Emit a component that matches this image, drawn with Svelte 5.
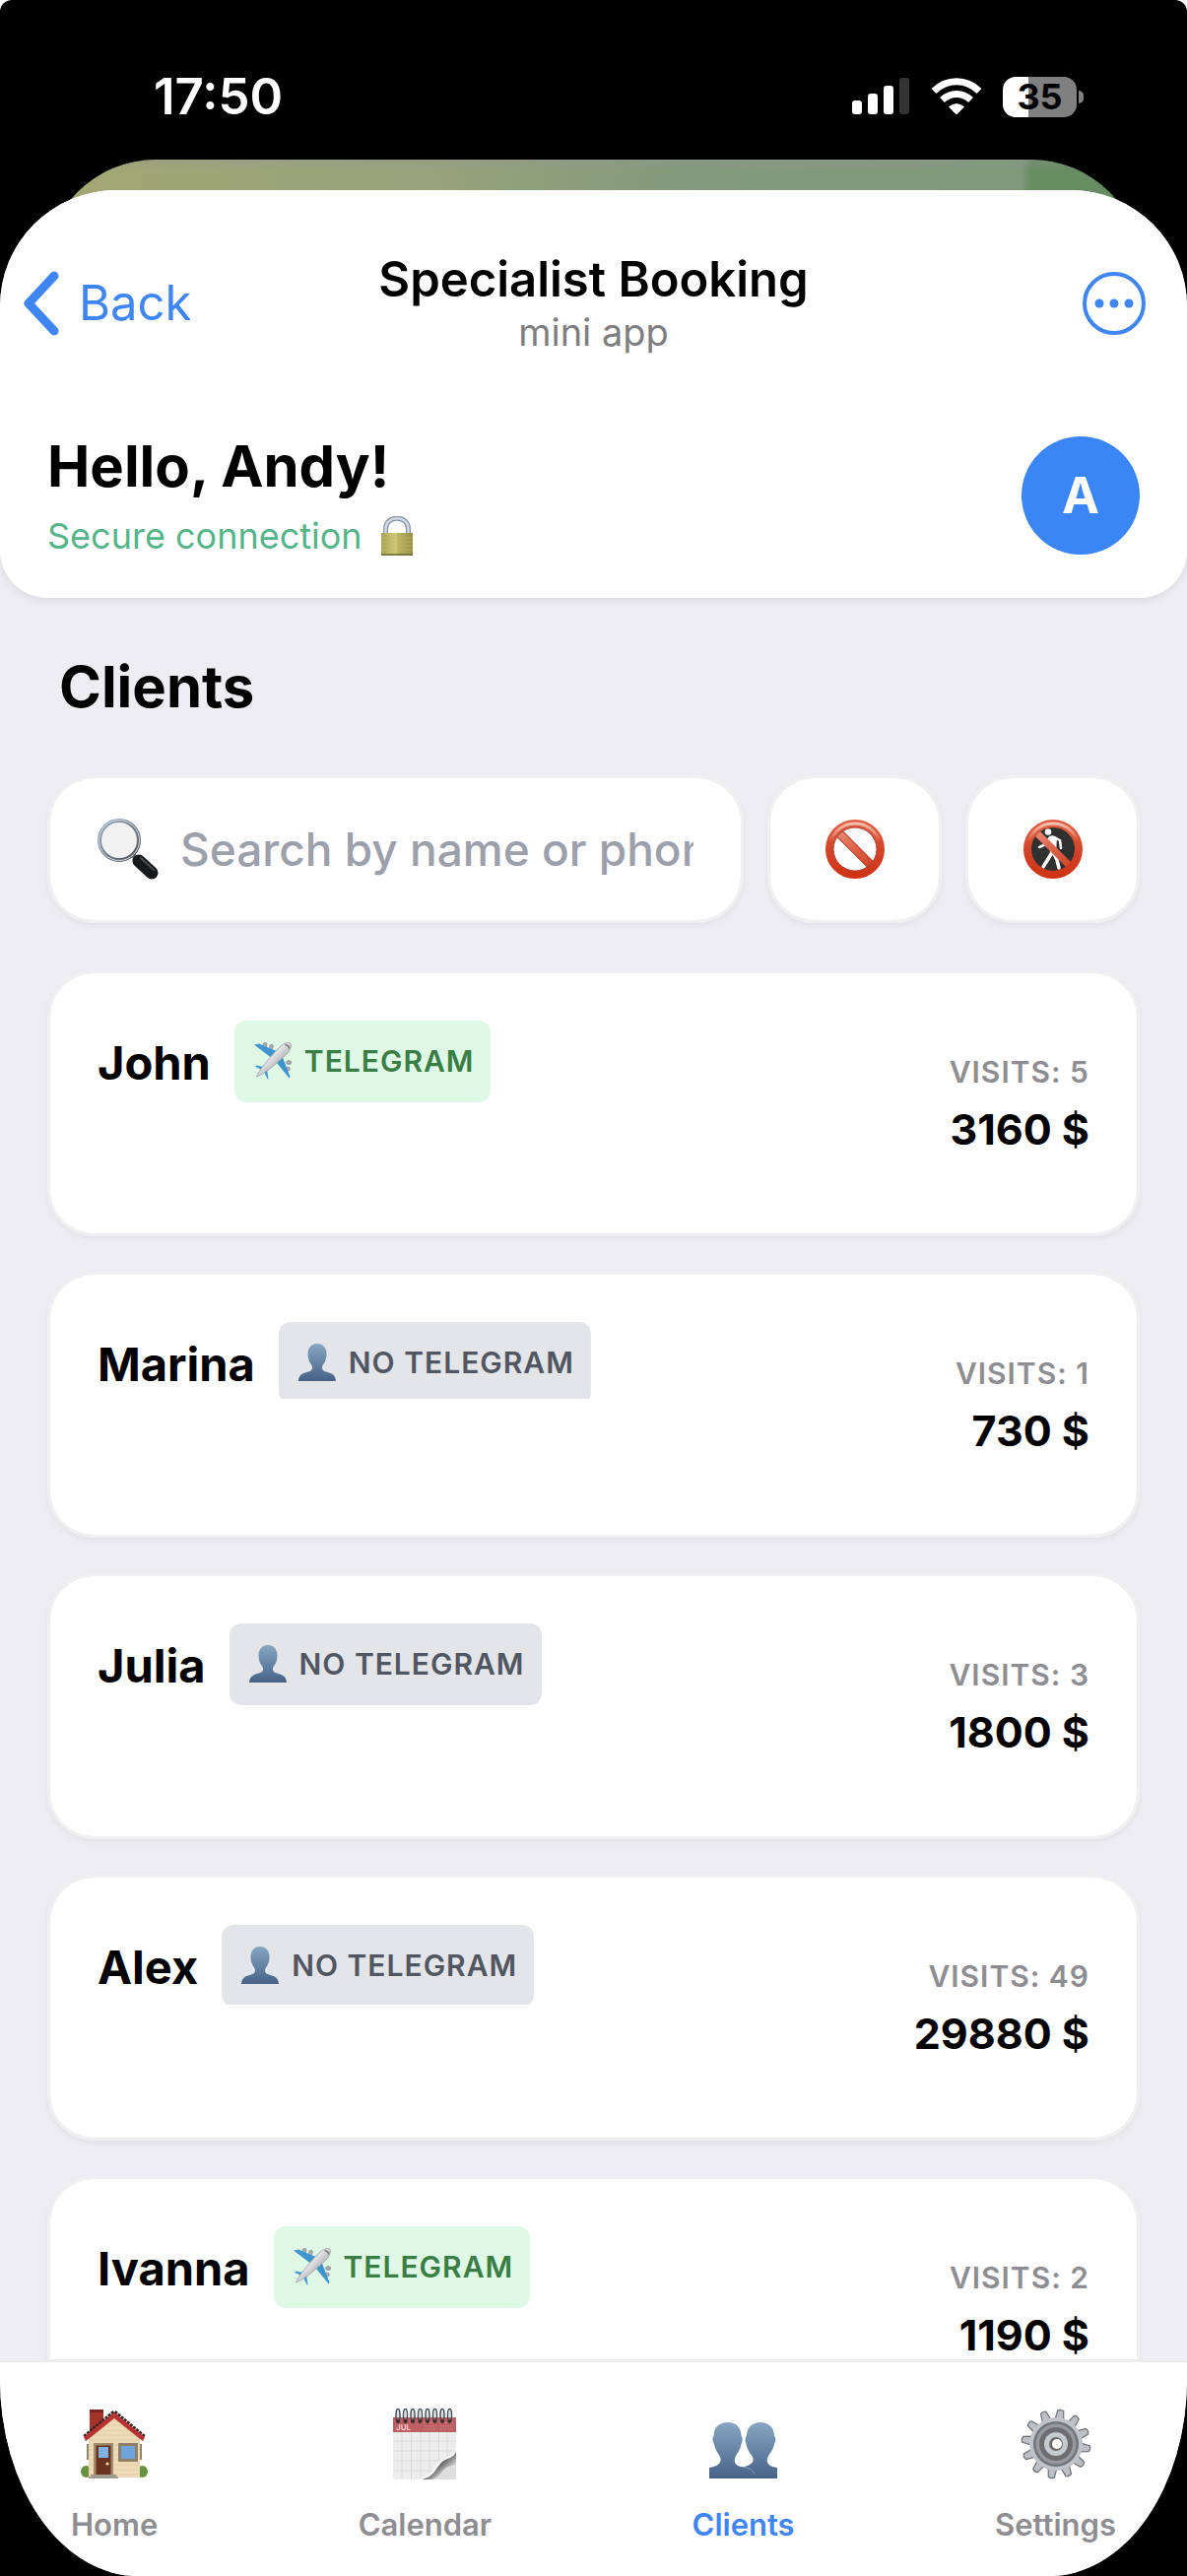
<script lang="ts">
	type Client = { name: string; telegram: boolean; visits: number; total: number; trim?: string };

	const clients: Client[] = [
		{ name: 'John', telegram: true, visits: 5, total: 3160 },
		{ name: 'Marina', telegram: false, visits: 1, total: 730, trim: 'flat' },
		{ name: 'Julia', telegram: false, visits: 3, total: 1800 },
		{ name: 'Alex', telegram: false, visits: 49, total: 29880, trim: 'short' },
		{ name: 'Ivanna', telegram: true, visits: 2, total: 1190 }
	];

	const tabs = ['Home', 'Calendar', 'Clients', 'Settings'];
	const teeth = Array.from({ length: 12 }, (_, i) => i * 30 + 8);
	const rings = Array.from({ length: 8 }, (_, i) => 5 + i * 7.5);

	let activeTab = $state('Clients');
	let query = $state('');

	let visible = $derived(
		clients.filter((client) => client.name.toLowerCase().includes(query.toLowerCase()))
	);
</script>

{#snippet plane()}
	<svg class="badge__icon" viewBox="0 0 38 38" aria-hidden="true">
		<g fill="#a9aaad" stroke="#7d8187" stroke-width="0.6">
			<ellipse cx="11" cy="2.8" rx="2" ry="2.6" />
			<ellipse cx="17.5" cy="4.6" rx="1.9" ry="2.4" />
			<ellipse cx="35.2" cy="20.6" rx="2.6" ry="2" />
			<ellipse cx="34" cy="27" rx="2.4" ry="1.9" />
		</g>
		<path d="M0 2.5 5 1.5 25 10 19 17Z" fill="#3f95cf" />
		<path d="M36.500 35 35.500 36.500 21.500 19 28 13Z" fill="#3f95cf" />
		<path d="M.5 24.500 3 23.500 12 25.500 9 29Z" fill="#4a9dd4" />
		<path d="M14.500 37.500 13.500 37.500 9.500 29 13 26Z" fill="#4a9dd4" />
		<path
			d="M2.500 35C5 29 13 18 26 5 29.500 1.500 34.500-.8 36.800 1.200 38.800 3.500 36 9 32.500 12.500 20 24.500 9 32.500 2.500 35Z"
			fill="url(#fuselage)"
			stroke="#9b9ca0"
			stroke-width="0.8"
		/>
		<path d="M31.500 2.500Q35 3 35.800 6.500" fill="none" stroke="#77797e" stroke-width="1.500" />
	</svg>
{/snippet}

{#snippet bust()}
	<svg class="badge__icon" viewBox="0 0 38 38" aria-hidden="true">
		<path
			d="M19 0C25 0 28.500 4.500 28.500 10.500 28.500 14.500 27.500 18 25.500 20.500 23.500 23 23.500 25 25 27 27.500 30 37.500 28 38 38H0C.500 28 10.500 30 13 27 14.500 25 14.500 23 12.500 20.500 10.500 18 9.500 14.500 9.500 10.500 9.500 4.500 13 0 19 0Z"
			fill="url(#silhouette)"
		/>
	</svg>
{/snippet}

{#snippet tabIcon(name: string)}
	<svg class="tab__icon" viewBox="0 0 72 72" aria-hidden="true">
		{#if name === 'Home'}
			<rect x="11" y="1" width="14" height="28" fill="#a3342c" />
			<rect x="11" y="1" width="14" height="3" fill="#7c241f" />
			<ellipse cx="7.500" cy="64" rx="5.500" ry="6" fill="#68923f" />
			<ellipse cx="64.500" cy="64" rx="5.500" ry="6" fill="#68923f" />
			<rect x="8" y="36" width="3" height="16" fill="#8f846c" />
			<rect x="61" y="36" width="3" height="16" fill="#8f846c" />
			<path d="M36 6 62 29V70H10V29Z" fill="#ecdbb6" />
			<path
				d="M26 17h20M20 22h32M15 27h42M10 32h52M10 37h52M10 42h52M10 47h52M10 52h52M10 57h52M10 62h52M10 67h52"
				stroke="#dfcca3"
				stroke-width="0.8"
			/>
			<path d="M36 4 66 29" fill="none" stroke="#302020" stroke-width="5" stroke-dasharray="3 1" />
			<path d="M36 4 6 29" fill="none" stroke="#302020" stroke-width="5" stroke-dasharray="3 1" />
			<path d="M5 29 36 4 67 29 65 33 61 30 36 10 11 30 7 33Z" fill="#b8332f" />
			<rect x="15" y="35" width="20" height="32" fill="#a08b6d" />
			<rect x="17.500" y="37.500" width="15" height="30" fill="#69311f" />
			<rect x="20" y="39" width="10" height="11" fill="#7eb2e2" />
			<circle cx="29" cy="56" r="1.600" fill="#f3d9a2" />
			<path d="M12 67H38V70H12ZM10 69H40V71H10Z" fill="#a19a8f" />
			<rect x="40" y="35" width="20" height="19" fill="#8e7f66" />
			<rect x="43" y="38" width="14" height="13" fill="#6ea3dc" />
		{:else if name === 'Calendar'}
			<rect x="4" y="9" width="64" height="63" fill="#ededed" />
			<rect x="4" y="9" width="64" height="15" fill="#bd5e63" />
			<path
				d="M13 24V72M22.500 24V72M32 24V72M41 24V72M50.500 24V72M59 24V72M4 33H68M4 43H68M4 53H68M4 63H68"
				stroke="#dadada"
				stroke-width="1"
			/>
			<text x="7" y="22" class="tab__month">JUL</text>
			<path d="M35 14.500h13M52 14.500h13M35 18h13M52 18h13M35 21h13M52 21h13" stroke="#cf878a" stroke-width="1" stroke-dasharray="1.500 1" />
			<path d="M28 72Q42 69 47 58 51 51 60 49 67 46 68 36V72Z" fill="#f8f8f8" />
			<path d="M34 72Q44 69 49 60 54 52 62 50 67 48 68 43V58Q58 58 54 64 50 70 44 72Z" fill="url(#curl)" />
			<path d="M44 72Q50 70 54 64 58 58 68 58V72Z" fill="#dedede" />
			{#each rings as x}
				<ellipse cx={x + 4} cy="7" rx="2" ry="6.500" fill="none" stroke="#434b50" stroke-width="1.500" />
				<path d="M{x + 4} 2V9" stroke="#cfdce0" stroke-width="1.500" />
				<circle cx={x + 4} cy="13" r="2" fill="#3f2c2e" />
			{/each}
		{:else if name === 'Clients'}
			<path
				d="M53 14C61 14 67 19 67 28 68.500 29 69 33 67 36 66 42 62 46 60.500 49 58.500 54 60 59 70 60V71H30V60C44 59 47 54 45 49 43 46 39.500 42 38.500 36 37 33 37.500 29 39 28 39 19 45 14 53 14Z"
				fill="url(#silhouette)"
			/>
			<path
				d="M20 14C28 14 33.500 19 33.500 28 35 29 35 33 33.500 36 32.500 42 29 46 27.500 49 25.500 54 27 58 35 59.500 42 60 46 63 48 71H1V60C11 59 14 54 12 49 10.500 46 7 42 6 36 4 33 4 29 5.500 28 5.500 19 11 14 20 14Z"
				fill="url(#silhouette)"
			/>
			<path d="M35 59.500Q45 60 47 67" fill="none" stroke="#91a6bd" stroke-width="0.8" />
		{:else}
			{#each teeth as angle}
				<path
					d="M31.500 12 33 2Q36 0 39 2L40.500 12Z"
					fill="#bcbfc6"
					stroke="#6e6f73"
					stroke-width="1.200"
					transform="rotate({angle} 36 36)"
				/>
			{/each}
			<circle cx="36" cy="36" r="27" fill="#c0c3c9" />
			<circle cx="36" cy="36" r="23" fill="#6f757b" />
			<circle cx="36" cy="36" r="20.500" fill="#969a9f" />
			<circle cx="36" cy="36" r="17" fill="#6e6e72" />
			<circle cx="36" cy="36" r="12" fill="#c6cbd2" />
			<circle cx="36" cy="36" r="7" fill="#6d6a66" />
			<circle cx="37" cy="36" r="5" fill="#fff" />
		{/if}
	</svg>
{/snippet}

<svg class="defs" aria-hidden="true">
	<defs>
		<linearGradient id="silhouette" x1="0" y1="0" x2="0" y2="1">
			<stop offset="0" stop-color="#86a6c3" />
			<stop offset="1" stop-color="#466287" />
		</linearGradient>
		<linearGradient id="fuselage" x1="0" y1="0" x2="1" y2="1">
			<stop offset="0.350" stop-color="#f3f2f3" />
			<stop offset="0.650" stop-color="#b5b4b8" />
		</linearGradient>
		<linearGradient id="curl" x1="0" y1="0" x2="1" y2="1">
			<stop offset="0.250" stop-color="#d5d5d5" />
			<stop offset="0.500" stop-color="#666" />
			<stop offset="0.750" stop-color="#dedede" />
		</linearGradient>
		<linearGradient id="ring" x1="0" y1="0" x2="0" y2="1">
			<stop offset="0" stop-color="#de5f43" />
			<stop offset="0.500" stop-color="#d4452a" />
			<stop offset="1" stop-color="#cf3417" />
		</linearGradient>
		<linearGradient id="shine" x1="0" y1="0" x2="0" y2="1">
			<stop offset="0" stop-color="#f8c2b3" />
			<stop offset="0.350" stop-color="#f8c2b3" stop-opacity="0" />
		</linearGradient>
		<linearGradient id="slash" x1="0" y1="0" x2="1" y2="1">
			<stop offset="0" stop-color="#e98a74" />
			<stop offset="0.500" stop-color="#dd6148" />
			<stop offset="1" stop-color="#cf4429" />
		</linearGradient>
		<linearGradient id="brass" x1="0" y1="0" x2="1" y2="0">
			<stop offset="0" stop-color="#aaa355" />
			<stop offset="0.480" stop-color="#d1ca78" />
			<stop offset="0.520" stop-color="#bdb566" />
			<stop offset="1" stop-color="#989044" />
		</linearGradient>
		<linearGradient id="lens" x1="0" y1="0" x2="1" y2="1">
			<stop offset="0" stop-color="#9db2cc" />
			<stop offset="1" stop-color="#4e4e4e" />
		</linearGradient>
	</defs>
</svg>

<div class="screen">
	<div class="status">
		<time>17:50</time>
		<div class="status__icons">
			<svg width="59" height="42" viewBox="0 0 59 42" aria-hidden="true">
				<g fill="#fff">
					<rect x="0" y="25" width="10" height="14" rx="3" />
					<rect x="16" y="18" width="10" height="21" rx="3" />
					<rect x="32" y="10" width="10" height="29" rx="3" />
				</g>
				<rect x="48" y="2" width="10" height="37" rx="3" fill="#333" />
			</svg>
			<svg width="52" height="42" viewBox="0 0 52 42" aria-hidden="true">
				<g fill="none" stroke="#fff" stroke-width="7">
					<path d="M3 15.500C16 2.500 36 2.500 49 15.500" />
					<path d="M11.500 24.500C20 16.500 32 16.500 40.500 24.500" />
				</g>
				<path d="M18 31.500Q26 24.500 34 31.500L26.800 38.700Q26 39.400 25.200 38.700Z" fill="#fff" />
			</svg>
			<div class="battery"><span>35</span></div>
		</div>
	</div>

	<div class="backdrop"></div>

	<div class="sheet">
		<header class="top">
			<div class="nav">
				<button class="nav__back" type="button">
					<svg width="38" height="66" viewBox="0 0 38 66" aria-hidden="true">
						<path d="M33 5 7 33 33 61" fill="none" stroke="#3f86f4" stroke-width="9" stroke-linecap="round" stroke-linejoin="round" />
					</svg>
					Back
				</button>
				<div class="nav__title">
					<strong>Specialist Booking</strong>
					<span>mini app</span>
				</div>
				<button class="nav__more" type="button" aria-label="More">
					<svg width="64" height="64" viewBox="0 0 64 64" aria-hidden="true">
						<circle cx="32" cy="32" r="30" fill="none" stroke="#3f86f4" stroke-width="4" />
						<g fill="#3f86f4">
							<circle cx="17" cy="32" r="4.500" />
							<circle cx="32" cy="32" r="4.500" />
							<circle cx="47" cy="32" r="4.500" />
						</g>
					</svg>
				</button>
			</div>

			<div class="greeting">
				<div>
					<h1>Hello, Andy!</h1>
					<p>
						Secure connection
						<svg width="34" height="40" viewBox="0 0 34 40" aria-hidden="true">
							<path d="M5.500 19V13C5.500-1.500 28.500-1.500 28.500 13V19" fill="none" stroke="#8894a4" stroke-width="5" />
							<path d="M5.500 19V13C5.500-1.500 28.500-1.500 28.500 13V19" fill="none" stroke="#d2dbe5" stroke-width="2.500" />
							<rect x="1" y="17" width="32" height="23" fill="url(#brass)" />
							<path d="M1 22h32M1 26h32M1 30h32M1 34h32" stroke="#c5bd70" stroke-width="0.6" />
							<path d="M1 39H33" stroke="#6d6836" stroke-width="1.500" />
						</svg>
					</p>
				</div>
				<div class="avatar">A</div>
			</div>
		</header>

		<main>
			<h2>Clients</h2>

			<div class="filters">
				<label class="search">
					<svg width="62" height="62" viewBox="0 0 62 62" aria-hidden="true">
						<path d="M36 37 42 43" stroke="#74777a" stroke-width="5" />
						<path d="M42 43 55 55" stroke="#18191b" stroke-width="13" stroke-linecap="round" />
						<path d="M44 40 57 52" stroke="#4a4b4e" stroke-width="2" stroke-linecap="round" />
						<circle cx="22" cy="22" r="20" fill="#f2f2f3" stroke="url(#lens)" stroke-width="4" />
						<circle cx="22" cy="22" r="20.500" fill="none" stroke="#d3dae3" stroke-width="1" />
					</svg>
					<input type="text" placeholder="Search by name or phone" aria-label="Search by name or phone" bind:value={query} />
				</label>
				<button class="filter" type="button" aria-label="Blocked clients">
					<svg width="60" height="60" viewBox="0 0 60 60" aria-hidden="true">
						<path d="M13 13 47 47" stroke="#b93a22" stroke-width="9" />
						<path d="M13 13 47 47" stroke="url(#slash)" stroke-width="7" />
						<circle cx="30" cy="30" r="26" fill="none" stroke="url(#ring)" stroke-width="8" />
						<circle cx="30" cy="30" r="26" fill="none" stroke="url(#shine)" stroke-width="3" />
						<circle cx="30" cy="30" r="22" fill="none" stroke="#a94331" stroke-width="1" />
					</svg>
				</button>
				<button class="filter" type="button" aria-label="No-show clients">
					<svg width="60" height="60" viewBox="0 0 60 60" aria-hidden="true">
						<circle cx="30" cy="30" r="26" fill="#303030" />
						<path d="M26 17Q30 15 34 18L33 35H27Z" fill="#fff" />
						<g fill="none" stroke="#fff" stroke-linecap="round" stroke-linejoin="round">
							<path d="M33 19 37 21 38 29" stroke-width="2.500" />
							<path d="M26 19 23 25 16 28" stroke-width="2.500" />
							<path d="M28 35 25 40 20 48" stroke-width="3.500" />
							<path d="M31 35 34 41 36 49" stroke-width="3.500" />
						</g>
						<circle cx="25" cy="12.500" r="3.300" fill="#fff" />
						<path d="M13 13 47 47" stroke="url(#slash)" stroke-width="7" />
						<circle cx="30" cy="30" r="26" fill="none" stroke="url(#ring)" stroke-width="8" />
						<circle cx="30" cy="30" r="26" fill="none" stroke="url(#shine)" stroke-width="3" />
					</svg>
				</button>
			</div>

			<ul class="clients">
				{#each visible as client (client.name)}
					<li class="card">
						<div class="card__person">
							<h3>{client.name}</h3>
							<span
								class="badge"
								class:badge--telegram={client.telegram}
								class:badge--flat={client.trim === 'flat'}
								class:badge--short={client.trim === 'short'}
							>
								{#if client.telegram}
									{@render plane()} Telegram
								{:else}
									{@render bust()} No Telegram
								{/if}
							</span>
						</div>
						<div class="card__stats">
							<span class="card__visits">Visits: {client.visits}</span>
							<strong>{client.total} $</strong>
						</div>
					</li>
				{/each}
			</ul>
		</main>

		<nav class="tabs">
			{#each tabs as tab}
				<button
					class="tab"
					class:is-active={activeTab === tab}
					type="button"
					onclick={() => (activeTab = tab)}
				>
					{@render tabIcon(tab)}
					{tab}
				</button>
			{/each}
		</nav>
	</div>
</div>

<style>
	:global(body) {
		background: #fff;
	}

	.defs {
		position: absolute;
		width: 0;
		height: 0;
	}

	.screen {
		display: flex;
		flex-direction: column;
		height: 100vh;
		overflow: hidden;
		border-radius: 12px 12px 0 0;
		background: #000;
		color: #000;
		font-family: Inter, 'Liberation Sans', sans-serif;
	}

	button {
		padding: 0;
		border: 0;
		background: none;
		color: inherit;
		font: inherit;
		cursor: pointer;
	}

	svg {
		display: block;
		flex: none;
	}

	h1,
	h2,
	h3,
	p,
	ul {
		margin: 0;
		padding: 0;
	}

	.status {
		display: flex;
		align-items: center;
		justify-content: space-between;
		flex: none;
		height: 62px;
		padding: 67px 112px 33px 156px;
		color: #fff;
	}

	.status time {
		font-size: 51px;
		font-weight: 600;
		line-height: 60px;
	}

	.status__icons {
		display: flex;
		align-items: center;
		gap: 21px;
	}

	.battery {
		position: relative;
		width: 75px;
		height: 41px;
		border-radius: 13px;
		background: linear-gradient(90deg, #fff 26px, #808080 26px);
		color: #000;
		font-size: 36px;
		font-weight: 700;
		line-height: 41px;
		text-align: center;
	}

	.battery::after {
		content: '';
		position: absolute;
		top: 14px;
		right: -7px;
		width: 5px;
		height: 13px;
		border-radius: 0 6px 6px 0;
		background: #808080;
	}

	.backdrop {
		flex: none;
		height: 120px;
		margin: 0 46px -89px;
		border-radius: 112px 112px 0 0;
		background:
			linear-gradient(rgb(150 150 150 / 35%), transparent 12px),
			linear-gradient(90deg, transparent calc(100% - 122px), #678c62 calc(100% - 112px)),
			linear-gradient(90deg, #a3a773, #97a37c 35%, #839a7c 58%, #7d9879);
	}

	.sheet {
		position: relative;
		display: flex;
		flex: 1;
		flex-direction: column;
		min-height: 0;
		overflow: hidden;
		border-radius: 118px 118px 140px 140px / 118px 118px 200px 200px;
		background: #eeedf2;
	}

	.top {
		position: relative;
		flex: none;
		padding: 62px 48px 39px;
		border-radius: 0 0 48px 48px;
		background: #fff;
		box-shadow: 0 3px 9px rgb(0 0 0 / 8%);
	}

	.nav {
		display: grid;
		grid-template-columns: 1fr auto 1fr;
		align-items: center;
		margin: 0 -26px;
	}

	.nav__back {
		display: flex;
		align-items: center;
		gap: 20px;
		color: #3f86f4;
		font-size: 49px;
		line-height: 60px;
	}

	.nav__title {
		display: flex;
		flex-direction: column;
		align-items: center;
	}

	.nav__title strong {
		font-size: 49px;
		font-weight: 600;
		line-height: 58px;
	}

	.nav__title span {
		color: #7e7e80;
		font-size: 38px;
		line-height: 48px;
	}

	.nav__more {
		justify-self: end;
		margin-right: 20px;
	}

	.greeting {
		display: flex;
		align-items: center;
		justify-content: space-between;
		margin-top: 76px;
	}

	h1,
	h2 {
		font-size: 58px;
		font-weight: 700;
		line-height: 72px;
	}

	.greeting p {
		display: flex;
		align-items: center;
		gap: 18px;
		margin-top: 11px;
		color: #55b58a;
		font-size: 36px;
		line-height: 48px;
	}

	.avatar {
		width: 120px;
		height: 120px;
		border-radius: 50%;
		background: #3b86f7;
		color: #fff;
		font-size: 51px;
		font-weight: 700;
		line-height: 120px;
		text-align: center;
	}

	main {
		flex: 1;
		min-height: 0;
		overflow: hidden;
		padding: 54px 48px 0;
	}

	h2 {
		padding-left: 12px;
	}

	.filters {
		display: flex;
		gap: 24px;
		margin: 54px 0 48px;
	}

	.search,
	.filter,
	.card {
		box-sizing: border-box;
		border: 3px solid #f0f0f2;
		border-radius: 48px;
		background: #fff;
		background-clip: padding-box;
		box-shadow: 0 3px 6px rgb(0 0 0 / 5%);
	}

	.search {
		display: flex;
		align-items: center;
		flex: 1;
		gap: 22px;
		min-width: 0;
		height: 150px;
		padding: 0 48px;
	}

	.search input {
		flex: 1;
		min-width: 0;
		padding: 0;
		border: 0;
		outline: 0;
		background: none;
		color: #000;
		font: inherit;
		font-size: 46px;
		font-weight: 500;
	}

	.search input::placeholder {
		color: #9ca0ab;
	}

	.filter {
		display: flex;
		align-items: center;
		justify-content: center;
		width: 177px;
		height: 150px;
	}

	.clients {
		display: flex;
		flex-direction: column;
		gap: 36px;
		list-style: none;
	}

	.card {
		display: flex;
		align-items: flex-start;
		justify-content: space-between;
		height: 270px;
		padding: 48px;
	}

	.card__person {
		display: flex;
		align-items: flex-start;
		gap: 24px;
	}

	h3 {
		font-size: 47px;
		font-weight: 700;
		line-height: 86px;
	}

	.badge {
		display: flex;
		align-items: center;
		gap: 13px;
		box-sizing: border-box;
		height: 83px;
		padding: 0 17px 2px 20px;
		border-radius: 12px;
		background: #e4e5e9;
		color: #505762;
		font-size: 30px;
		font-weight: 600;
		letter-spacing: 1px;
		text-transform: uppercase;
	}

	.badge--telegram {
		background: #e0f9e7;
		color: #3a7d45;
	}

	.badge--flat {
		clip-path: inset(0 0 5px);
	}

	.badge--short {
		clip-path: inset(0 0 2px);
	}

	.badge__icon {
		width: 38px;
		height: 38px;
	}

	.card__stats {
		display: flex;
		flex-direction: column;
		align-items: flex-end;
		gap: 13px;
		padding-top: 34px;
	}

	.card__visits {
		color: #8e8e92;
		font-size: 30px;
		font-weight: 600;
		letter-spacing: 1px;
		line-height: 36px;
		text-transform: uppercase;
	}

	.card__stats strong {
		font-size: 43px;
		font-weight: 700;
		line-height: 54px;
	}

	.tabs {
		position: relative;
		display: flex;
		flex: none;
		justify-content: space-between;
		padding: 47px 72px 32px;
		border-top: 3px solid #ececf0;
		background: #fff;
	}

	.tab {
		display: flex;
		flex-direction: column;
		align-items: center;
		gap: 26px;
		color: #8e8e92;
		font-size: 31px;
		font-weight: 600;
		line-height: 40px;
	}

	.tab.is-active {
		color: #3f86f4;
	}

	.tab__icon {
		width: 72px;
		height: 72px;
	}

	.tab__month {
		fill: #f3d5d5;
		font-size: 8px;
	}
</style>
